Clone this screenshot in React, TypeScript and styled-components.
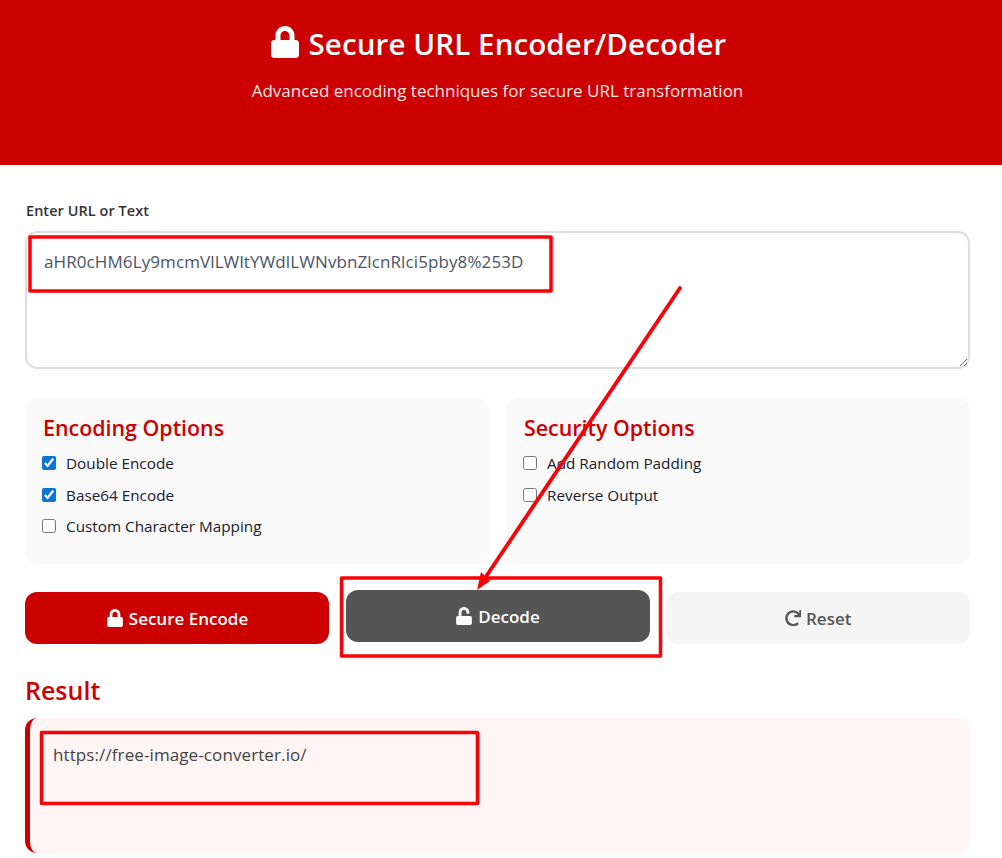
import React from "react";
import styled, { createGlobalStyle } from "styled-components";
import { FaLock, FaUnlock, FaRedo } from "react-icons/fa";

const GlobalStyle = createGlobalStyle`
  html, body {
    margin: 0;
    padding: 0;
    background: #fff;
    font-family: "Open Sans", "Noto Sans", sans-serif;
  }
  * {
    box-sizing: border-box;
  }
`;

const Page = styled.div`
  position: relative;
  width: 1002px;
  height: 858px;
  overflow: hidden;
`;

const Header = styled.header`
  height: 165px;
  background: #cc0000;
  color: #fff;
  text-align: center;
  padding: 21px 7px 0 0;
`;

const Title = styled.h1`
  margin: 0;
  height: 44px;
  display: flex;
  align-items: center;
  justify-content: center;
  gap: 8px;
  font-size: 29.5px;
  font-weight: 600;
  letter-spacing: 0.1px;
  svg {
    font-size: 32px;
    margin-top: -2px;
  }
`;

const Subtitle = styled.p`
  margin: 14px 0 0;
  font-size: 17px;
  line-height: 24px;
  opacity: 0.9;
`;

const Main = styled.main`
  padding: 36px 32px 0 25px;
`;

const FieldLabel = styled.label`
  display: block;
  height: 20px;
  margin-left: 1px;
  font-size: 14.4px;
  line-height: 20px;
  font-weight: 600;
  letter-spacing: 0.1px;
  color: #333;
`;

const UrlInput = styled.textarea`
  display: block;
  width: 945px;
  height: 138px;
  margin-top: 10px;
  padding: 17px 17px;
  border: 2px solid #ddd;
  border-radius: 12px;
  outline: none;
  resize: vertical;
  font-family: inherit;
  font-size: 17px;
  line-height: 24px;
  letter-spacing: 0.1px;
  color: #4a5568;
`;

const OptionsGrid = styled.div`
  display: grid;
  grid-template-columns: 464px 464px;
  gap: 17px;
  width: 945px;
  margin-top: 29px;
`;

const OptionsPanel = styled.section`
  height: 166px;
  padding: 16px 18px;
  background: #f9f9f9;
  border-radius: 12px;
`;

const PanelTitle = styled.h3`
  margin: 0 0 5.5px;
  height: 28px;
  font-size: 21.4px;
  line-height: 28px;
  font-weight: 600;
  color: #cc0000;
`;

const OptionRow = styled.label`
  display: flex;
  align-items: center;
  gap: 10px;
  height: 31.6px;
  font-size: 15.3px;
  font-weight: 500;
  color: #1a202c;
`;

const OptionCheck = styled.input.attrs({ type: "checkbox" })`
  width: 14px;
  height: 14px;
  margin: 0 0 0 -1px;
  accent-color: #0c74d4;
`;

const ButtonRow = styled.div`
  display: grid;
  grid-template-columns: repeat(3, 304px);
  gap: 16.5px;
  width: 945px;
  margin-top: 28px;
`;

const ActionButton = styled.button<{ $variant: "primary" | "secondary" | "muted" }>`
  display: flex;
  align-items: center;
  justify-content: center;
  gap: 5px;
  height: 52px;
  border: none;
  border-radius: 12px;
  font-family: inherit;
  font-size: 17px;
  font-weight: 600;
  background: ${(p) =>
    p.$variant === "primary" ? "#cc0000" : p.$variant === "secondary" ? "#555555" : "#f5f5f5"};
  color: ${(p) => (p.$variant === "muted" ? "#555" : "#fff")};
  transform: ${(p) => (p.$variant === "secondary" ? "translateY(-2px)" : "none")};
  svg {
    font-size: ${(p) => (p.$variant === "muted" ? "16.5px" : "18px")};
  }
`;

const ResultTitle = styled.h2`
  margin: 30px 0 12px;
  height: 32px;
  font-size: 25px;
  line-height: 32px;
  font-weight: 600;
  color: #cc0000;
`;

const ResultBox = styled.div`
  width: 945px;
  height: 135px;
  padding: 25px 23px;
  background: #fff5f5;
  border-left: 5px solid #cc0000;
  border-radius: 12px;
  font-size: 17px;
  line-height: 24px;
  letter-spacing: 0.1px;
  color: #444;
`;

// red markup someone drew on top of the screenshot
const Markup = styled.svg`
  position: absolute;
  top: 0;
  left: 0;
  pointer-events: none;
`;

const App: React.FC = () => {
  return (
    <Page>
      <GlobalStyle />
      <Header>
        <Title>
          <FaLock />
          Secure URL Encoder/Decoder
        </Title>
        <Subtitle>Advanced encoding techniques for secure URL transformation</Subtitle>
      </Header>
      <Main>
        <FieldLabel>Enter URL or Text</FieldLabel>
        <UrlInput defaultValue="aHR0cHM6Ly9mcmVlLWltYWdlLWNvbnZlcnRlci5pby8%253D" />
        <OptionsGrid>
          <OptionsPanel>
            <PanelTitle>Encoding Options</PanelTitle>
            <OptionRow>
              <OptionCheck defaultChecked />
              Double Encode
            </OptionRow>
            <OptionRow>
              <OptionCheck defaultChecked />
              Base64 Encode
            </OptionRow>
            <OptionRow>
              <OptionCheck />
              Custom Character Mapping
            </OptionRow>
          </OptionsPanel>
          <OptionsPanel>
            <PanelTitle>Security Options</PanelTitle>
            <OptionRow>
              <OptionCheck />
              Add Random Padding
            </OptionRow>
            <OptionRow>
              <OptionCheck />
              Reverse Output
            </OptionRow>
          </OptionsPanel>
        </OptionsGrid>
        <ButtonRow>
          <ActionButton $variant="primary">
            <FaLock />
            Secure Encode
          </ActionButton>
          <ActionButton $variant="secondary">
            <FaUnlock />
            Decode
          </ActionButton>
          <ActionButton $variant="muted">
            <FaRedo />
            Reset
          </ActionButton>
        </ButtonRow>
        <ResultTitle>Result</ResultTitle>
        <ResultBox>https://free-image-converter.io/</ResultBox>
      </Main>
      <Markup width="1002" height="858" viewBox="0 0 1002 858">
        <g fill="none" stroke="#fb0007" strokeWidth="3.5" strokeLinejoin="round">
          <rect x="30" y="237" width="521" height="54" />
          <rect x="341.5" y="578" width="319" height="78" />
          <rect x="41.5" y="732.5" width="436" height="71" />
        </g>
        <line x1="680" y1="288" x2="485" y2="578" stroke="#fb0007" strokeWidth="3.8" strokeLinecap="round" />
        <polygon points="477,590 481,572 490,581" fill="#fb0007" />
      </Markup>
    </Page>
  );
};

export default App;
